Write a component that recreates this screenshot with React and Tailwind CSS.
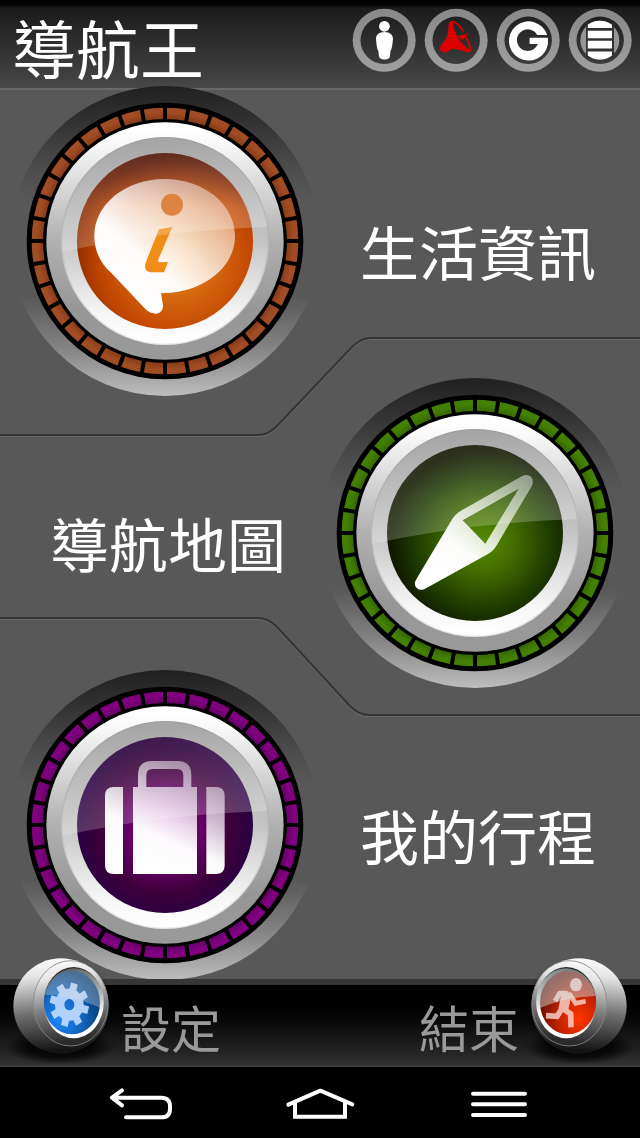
import React from "react";

const TICKS = Array.from({ length: 36 }, (_, i) => i * 10);

const THEMES = {
  orange: {
    tick: "#a04c24", tickDark: "#8c3f1b", stops: ["#f09a2c", "#d66a10", "#c04500", "#8a2c00"],
    cx: 500, cy: 520, r: 310, shade: 0.55, glyph: [330, 610, 590, 310],
  },
  green: {
    tick: "#437f02", tickDark: "#386c02", stops: ["#578b00", "#416c00", "#1d3a00", "#121a00"],
    cx: 490, cy: 490, r: 275, shade: 0.15, glyph: [330, 610, 590, 310],
  },
  purple: {
    tick: "#800080", tickDark: "#6c006c", stops: ["#a000a0", "#6e006e", "#3c003a", "#2c0042"],
    cx: 465, cy: 480, r: 260, shade: 0.15, glyph: [400, 610, 540, 290],
  },
};

function Dial({ theme, children }) {
  const t = THEMES[theme];
  const id = (name) => `${theme}-${name}`;
  const url = (name) => `url(#${theme}-${name})`;
  return (
    <svg viewBox="0 0 930 930" className="-my-[9px] size-[310px] shrink-0" aria-hidden="true">
      <defs>
        <linearGradient id={id("halo")} x1="0" y1="0" x2="0" y2="1">
          <stop offset="0" stopColor="#202020" />
          <stop offset="0.15" stopColor="#383838" />
          <stop offset="0.26" stopColor="#4c4c4c" />
          <stop offset="0.37" stopColor="#585858" />
          <stop offset="0.68" stopColor="#585858" />
          <stop offset="0.84" stopColor="#828282" />
          <stop offset="1" stopColor="#bdbdbd" />
        </linearGradient>
        <linearGradient id={id("rim")} x1="0" y1="0" x2="0" y2="1">
          <stop offset="0" stopColor="#ffffff" />
          <stop offset="0.08" stopColor="#fafafa" />
          <stop offset="0.5" stopColor="#b0b0b0" />
          <stop offset="0.8" stopColor="#969696" />
          <stop offset="1" stopColor="#9a9a9a" />
        </linearGradient>
        <linearGradient id={id("plate")} x1="0" y1="0" x2="0" y2="1">
          <stop offset="0" stopColor="#9c9c9c" />
          <stop offset="0.5" stopColor="#c4c4c4" />
          <stop offset="0.85" stopColor="#f6f6f6" />
          <stop offset="1" stopColor="#ffffff" />
        </linearGradient>
        <radialGradient id={id("lens")} gradientUnits="userSpaceOnUse" cx={t.cx} cy={t.cy} r={t.r}>
          <stop offset="0" stopColor={t.stops[0]} />
          <stop offset="0.35" stopColor={t.stops[1]} />
          <stop offset="0.75" stopColor={t.stops[2]} />
          <stop offset="1" stopColor={t.stops[3]} />
        </radialGradient>
        <linearGradient id={id("shade")} x1="0" y1="0" x2="0" y2="1">
          <stop offset="0" stopColor="#1c0010" stopOpacity={t.shade} />
          <stop offset="0.3" stopColor="#1c0010" stopOpacity="0" />
        </linearGradient>
        <linearGradient id={id("gloss")} x1="0" y1="0" x2="0.45" y2="1">
          <stop offset="0" stopColor="#ffffff" stopOpacity="0.04" />
          <stop offset="1" stopColor="#ffffff" stopOpacity="0.23" />
        </linearGradient>
        <linearGradient id={id("glyph")} gradientUnits="userSpaceOnUse" x1={t.glyph[0]} y1={t.glyph[1]} x2={t.glyph[2]} y2={t.glyph[3]}>
          <stop offset="0" stopColor="#ffffff" />
          <stop offset="0.3" stopColor="#ffffff" stopOpacity="0.98" />
          <stop offset="0.62" stopColor="#ffffff" stopOpacity="0.72" />
          <stop offset="1" stopColor="#ffffff" stopOpacity="0.46" />
        </linearGradient>
        <radialGradient id={id("ticks")} gradientUnits="userSpaceOnUse" cx="465" cy="465" r="402">
          <stop offset="0.92" stopColor={t.tickDark} />
          <stop offset="0.96" stopColor={t.tick} />
        </radialGradient>
        <clipPath id={id("clip")}>
          <circle cx="465" cy="465" r="310" />
        </clipPath>
      </defs>
      <circle cx="465" cy="465" r="465" fill={url("halo")} />
      <circle cx="465" cy="465" r="415" fill="#000" />
      <circle cx="465" cy="465" r="383" fill="none" stroke={url("ticks")} strokeWidth="34" />
      {TICKS.map((a) => (
        <line key={a} x1="465" y1="58" x2="465" y2="104" stroke="#000" strokeWidth="12" transform={`rotate(${a} 465 465)`} />
      ))}
      <circle cx="465" cy="465" r="356" fill={url("rim")} />
      <circle cx="465" cy="465" r="312" fill={url("plate")} />
      <circle cx="465" cy="465" r="310" fill="none" stroke="#999" strokeOpacity="0.25" strokeWidth="4" />
      <circle cx="465" cy="465" r="264" fill={url("lens")} />
      <circle cx="465" cy="465" r="264" fill={url("shade")} />
      {children(url("glyph"))}
      <path d="M150 499 Q450 432 780 423 V140 H150 Z" fill={url("gloss")} clipPath={url("clip")} />
    </svg>
  );
}

function InfoGlyph({ fill }) {
  return (
    <g transform="translate(-30 -18)">
      <path
        d="M494 297C611 297 705 373 705 468C705 562 611 639 483 640L489 676Q489 701 467 701Q451 701 436 687L335 580C300 550 283 510 283 468C283 373 377 297 494 297Z"
        fill={fill}
      />
      <circle cx="516" cy="374" r="33" fill="#d46a1a" />
      <path d="M477 448L517 441L475 538Q472 547 480 547L504 546L492 577H452Q428 574 438 545Z" fill="#f08c18" />
    </g>
  );
}

function CompassGlyph({ fill }) {
  return (
    <g transform="translate(0 -24)">
      <path
        fillRule="evenodd"
        d="M607 318Q622 311 633 320Q642 330 636 347L531 524Q520 544 500 554L314 657Q298 664 288 652Q281 642 288 629L392 455Q405 432 425 421ZM428 451L496 521L596 356Z"
        fill={fill}
      />
    </g>
  );
}

function SuitcaseGlyph({ fill }) {
  return (
    <g transform="translate(-30 -30)" fill={fill}>
      <path d="M369 381H341Q315 381 315 407V616Q315 642 341 642H369Z" />
      <path d="M619 381H648Q674 381 674 407V616Q674 642 648 642H619Z" />
      <path
        fillRule="evenodd"
        d="M399 381H414V345Q414 303 456 303H532Q574 303 574 345V381H591V642H399ZM439 381H550V346Q550 327 531 327H458Q439 327 439 346Z"
      />
    </g>
  );
}

function StatusIcon({ label, id, children }) {
  return (
    <svg viewBox="0 0 64 64" className="size-16" role="img" aria-label={label}>
      <defs>
        <linearGradient id={id} x1="0" y1="0" x2="0" y2="1">
          <stop offset="0" stopColor="#888" />
          <stop offset="1" stopColor="#a0a0a0" />
        </linearGradient>
        <linearGradient id={`${id}-inner`} x1="0" y1="0" x2="0" y2="1">
          <stop offset="0" stopColor="#1f1f1f" />
          <stop offset="1" stopColor="#3c3c3c" />
        </linearGradient>
      </defs>
      <circle cx="32.2" cy="32.3" r="31.5" fill={`url(#${id})`} />
      <circle cx="32.2" cy="32.3" r="23.7" fill={`url(#${id}-inner)`} />
      {children}
    </svg>
  );
}

function StatusIcons() {
  return (
    <div className="flex gap-2">
      <StatusIcon label="使用者" id="ring-user">
        <circle cx="32.4" cy="18.3" r="5.4" fill="#fff" />
        <path d="M32.4 24C38.2 24 41 27 41 31L40.3 37Q39.8 41 38.4 43L38 48Q37.8 51.4 32.4 51.4Q27.3 51.4 26.9 48L26.4 43Q25 41 24.6 37L24 31C24 27 26.6 24 32.4 24Z" fill="#fff" />
      </StatusIcon>
      <StatusIcon label="衛星訊號" id="ring-dish">
        <g transform="translate(1 0) scale(0.3333)" fill="#dc0000">
          <path d="M71 48Q72 39 80 39Q84 40 85 50Q88 74 102 94Q113 112 133 126Q132 134 122 131Q100 124 82 122Q76 124 72 128Q64 135 54 133Q44 129 45 120Q46 112 52 106Q62 96 66 86Q70 70 71 48Z" />
          <path d="M80 40Q98 42 115 70M122 87Q138 114 136 127Q134 132 124 129" fill="none" stroke="#dc0000" strokeWidth="5" />
          <path d="M97 83L114 81L131 75L121 88L112 96Z" />
        </g>
      </StatusIcon>
      <StatusIcon label="GPS" id="ring-g">
        <path
          d="M51.2 27A19.6 19.6 0 1 0 51.9 36V29.8H33.6V36H41.8A10.8 10.8 0 1 1 41.2 27Z"
          fill="#fff"
        />
      </StatusIcon>
      <StatusIcon label="資料庫" id="ring-db">
        <circle cx="31.8" cy="32.3" r="19.5" fill="#969696" />
        <path d="M18 14.5H20V20H44V14.5H46V50H18Z" fill="#333" />
        <path d="M19.8 20V16.8Q25 12.8 31.8 12.8Q38.8 12.8 44 16.8V20Z" fill="#fff" />
        <path d="M19.8 22.8H44V30.2H19.8ZM19.8 32.8H44V40.4H19.8Z" fill="#fff" />
        <path d="M19.8 43.6H44V47.4Q38.8 51.4 31.8 51.4Q25 51.4 19.8 47.4Z" fill="#fff" />
      </StatusIcon>
    </div>
  );
}

const LINE_UP = "M0 98Q10 98 19 89L94 10Q103 1 113 1H124";
const LINE_DOWN = "M0 1Q10 1 19 10L91 88Q100 98 111 98H124";

function Divider({ rising, className }) {
  const edge = "h-[3px] flex-1 border-b border-b-[#6b6b6b] bg-[#353535]";
  const d = rising ? LINE_UP : LINE_DOWN;
  return (
    <div aria-hidden="true" className={`pointer-events-none absolute inset-x-0 flex ${className}`}>
      <div className={`${edge} ${rising ? "self-end" : "self-start"}`} />
      <svg viewBox="0 0 124 100" className="h-[100px] w-[124px] shrink-0" fill="none">
        <path d={d} transform="translate(0 1.5)" stroke="#6b6b6b" strokeWidth="1.2" />
        <path d={d} stroke="#353535" strokeWidth="2" />
      </svg>
      <div className={`${edge} ${rising ? "self-start" : "self-end"}`} />
    </div>
  );
}

function MenuRow({ label, theme, Glyph, reverse }) {
  return (
    <button type="button" className={`flex w-full items-center px-[10px] ${reverse ? "flex-row-reverse gap-[34px]" : "gap-10"}`}>
      <Dial theme={theme}>{(fill) => <Glyph fill={fill} />}</Dial>
      <span className="pt-5 text-[59px] leading-[72px] whitespace-nowrap text-white">{label}</span>
    </button>
  );
}

const GEAR = Array.from({ length: 8 }, (_, i) => {
  const c = 15 + i * 45;
  return [[-14, 45], [-10, 62], [10, 62], [14, 45]]
    .map(([o, r]) => {
      const a = ((c + o) * Math.PI) / 180;
      return `${(208 + r * 0.96 * Math.cos(a)).toFixed(1)} ${(194 + r * 1.08 * Math.sin(a)).toFixed(1)}`;
    })
    .join("L");
}).join("L");

function Ball({ id, mirrored, colors, gloss, children }) {
  const flip = mirrored ? "translate(372 0) scale(-1 1)" : undefined;
  const u = (n) => `url(#${id}-${n})`;
  return (
    <svg viewBox="21 51 330 330" className="-mb-0.5 size-[110px] shrink-0" aria-hidden="true">
      <defs>
        <linearGradient id={`${id}-body`} x1="0" y1="0" x2="0.1" y2="1">
          <stop offset="0" stopColor="#ffffff" />
          <stop offset="0.22" stopColor="#e4e4e4" />
          <stop offset="0.6" stopColor="#707070" />
          <stop offset="1" stopColor="#141414" />
        </linearGradient>
        <linearGradient id={`${id}-front`} x1="0" y1="0" x2="0.15" y2="1">
          <stop offset="0" stopColor="#ffffff" />
          <stop offset="0.25" stopColor="#e4e4e4" />
          <stop offset="0.6" stopColor="#808080" />
          <stop offset="1" stopColor="#2a2a2a" />
        </linearGradient>
        <linearGradient id={`${id}-lip`} x1="0.3" y1="0" x2="0.6" y2="1">
          <stop offset="0" stopColor="#1a1a1a" />
          <stop offset="0.45" stopColor="#8c8c8c" />
          <stop offset="0.75" stopColor="#ffffff" />
        </linearGradient>
        <radialGradient id={`${id}-lens`} cx="0.3" cy="0.75" r="0.75">
          <stop offset="0" stopColor={colors[0]} />
          <stop offset="0.5" stopColor={colors[1]} />
          <stop offset="1" stopColor={colors[2]} />
        </radialGradient>
        <radialGradient id={`${id}-shadow`}>
          <stop offset="0" stopColor="#000" />
          <stop offset="0.6" stopColor="#000" stopOpacity="0.75" />
          <stop offset="1" stopColor="#000" stopOpacity="0" />
        </radialGradient>
        <clipPath id={`${id}-clip`}>
          <ellipse cx="222" cy="188" rx="90" ry="103" />
        </clipPath>
      </defs>
      <g transform={flip}>
        <ellipse cx="180" cy="320" rx="168" ry="54" fill={u("shadow")} />
        <circle cx="196" cy="202" r="150" fill={u("shadow")} />
        <circle cx="183" cy="198" r="143" fill={u("body")} />
        <ellipse cx="212" cy="190" rx="112" ry="128" fill={u("front")} stroke="#888" strokeWidth="2.5" />
        <ellipse cx="221" cy="188" rx="90" ry="107" fill={u("lip")} />
        <ellipse cx="216" cy="188" rx="84" ry="95" fill={u("lens")} />
      </g>
      {children}
      <g transform={flip}>
        <path d={gloss.d} fill="#d8e4ea" fillOpacity={gloss.opacity} clipPath={u("clip")} />
      </g>
    </svg>
  );
}

function SettingsBall() {
  return (
    <Ball
      id="settings"
      colors={["#1e88ff", "#1266c0", "#0a3a70"]}
      gloss={{ d: "M120 166Q215 158 330 218V60H120Z", opacity: 0.32 }}
    >
      <path fillRule="evenodd" fill="#c4dcff" fillOpacity="0.9" d={`M${GEAR}ZM193 194a15 17 0 1 0 30 0a15 17 0 1 0 -30 0Z`} />
    </Ball>
  );
}

function ExitBall() {
  return (
    <Ball
      id="exit"
      mirrored
      colors={["#ff3500", "#c42200", "#5c0c00"]}
      gloss={{ d: "M120 168Q215 166 320 212V60H120Z", opacity: 0.46 }}
    >
      <g transform="translate(-587 0)" opacity="0.78" fill="none" stroke="#fbdcd4">
        <ellipse cx="767" cy="134" rx="18" ry="20" fill="#fbdcd4" stroke="none" />
        <path d="M740 156L729 208" strokeWidth="30" />
        <path d="M742 160H718L704 184" strokeWidth="15" strokeLinejoin="round" />
        <path d="M746 160L766 190L796 184" strokeWidth="14" />
        <path d="M726 204L710 229L677 227" strokeWidth="17" />
        <path d="M728 206L751 222L752 262" strokeWidth="17" />
      </g>
    </Ball>
  );
}

export default function App() {
  return (
    <div className="flex min-h-screen flex-col bg-black font-['Noto_Sans_CJK_TC','Noto_Sans',sans-serif]">
      <header className="flex items-start justify-between border-b-2 border-b-[#696969] bg-[linear-gradient(180deg,#000_0,#060606_5px,#1b1b1b_8px,#474747_88px)] pr-2 pl-3">
        <h1 className="-mb-1 text-[64px] leading-[92px] text-white">導航王</h1>
        <div className="pt-2">
          <StatusIcons />
        </div>
      </header>

      <main className="relative bg-[#585858] pt-[5px] pb-2">
        <MenuRow label="生活資訊" theme="orange" Glyph={InfoGlyph} />
        <div className="relative">
          <Divider rising className="-top-[50px]" />
          <MenuRow label="導航地圖" theme="green" Glyph={CompassGlyph} reverse />
          <Divider className="-bottom-[38px]" />
        </div>
        <MenuRow label="我的行程" theme="purple" Glyph={SuitcaseGlyph} />
      </main>

      <footer className="relative flex items-end justify-between border-t-[6px] border-b-2 border-t-[#363636] border-b-[#3a3a3a] bg-linear-to-b from-black to-[#303030] px-[7px]">
        <button type="button" className="-mt-7 flex items-end gap-1 text-[50px] leading-[78px] text-[#999]">
          <SettingsBall />
          <span>設定</span>
        </button>
        <button type="button" className="-mt-7 flex items-end gap-1 text-[50px] leading-[78px] text-[#999]">
          <span>結束</span>
          <ExitBall />
        </button>
      </footer>

      <nav className="grid flex-1 grid-cols-3 content-start px-[52px] pt-4 pb-[15px]">
        <button type="button" aria-label="返回" className="flex justify-center">
          <svg viewBox="315 427 216 120" className="h-10 w-[72px]" fill="none" stroke="#fff" strokeWidth="12" strokeLinecap="round" strokeLinejoin="round">
            <path d="M366 449L336 471L366 494M336 471H484Q510 471 510 497V504Q510 530 484 530H378" />
          </svg>
        </button>
        <button type="button" aria-label="主畫面" className="flex justify-center">
          <svg viewBox="852 427 216 120" className="h-10 w-[72px]" fill="none" stroke="#fff" strokeWidth="12" strokeLinecap="round" strokeLinejoin="round">
            <path d="M865 492L961 450L1057 491" />
            <path d="M885 486V528H1035V486" strokeLinejoin="miter" />
          </svg>
        </button>
        <button type="button" aria-label="選單" className="flex justify-center">
          <svg viewBox="431 427 216 120" className="h-10 w-[72px]" fill="none" stroke="#fff" strokeWidth="12" strokeLinecap="round">
            <path d="M461 459H617M461 491H617M461 523H617" />
          </svg>
        </button>
      </nav>
    </div>
  );
}
